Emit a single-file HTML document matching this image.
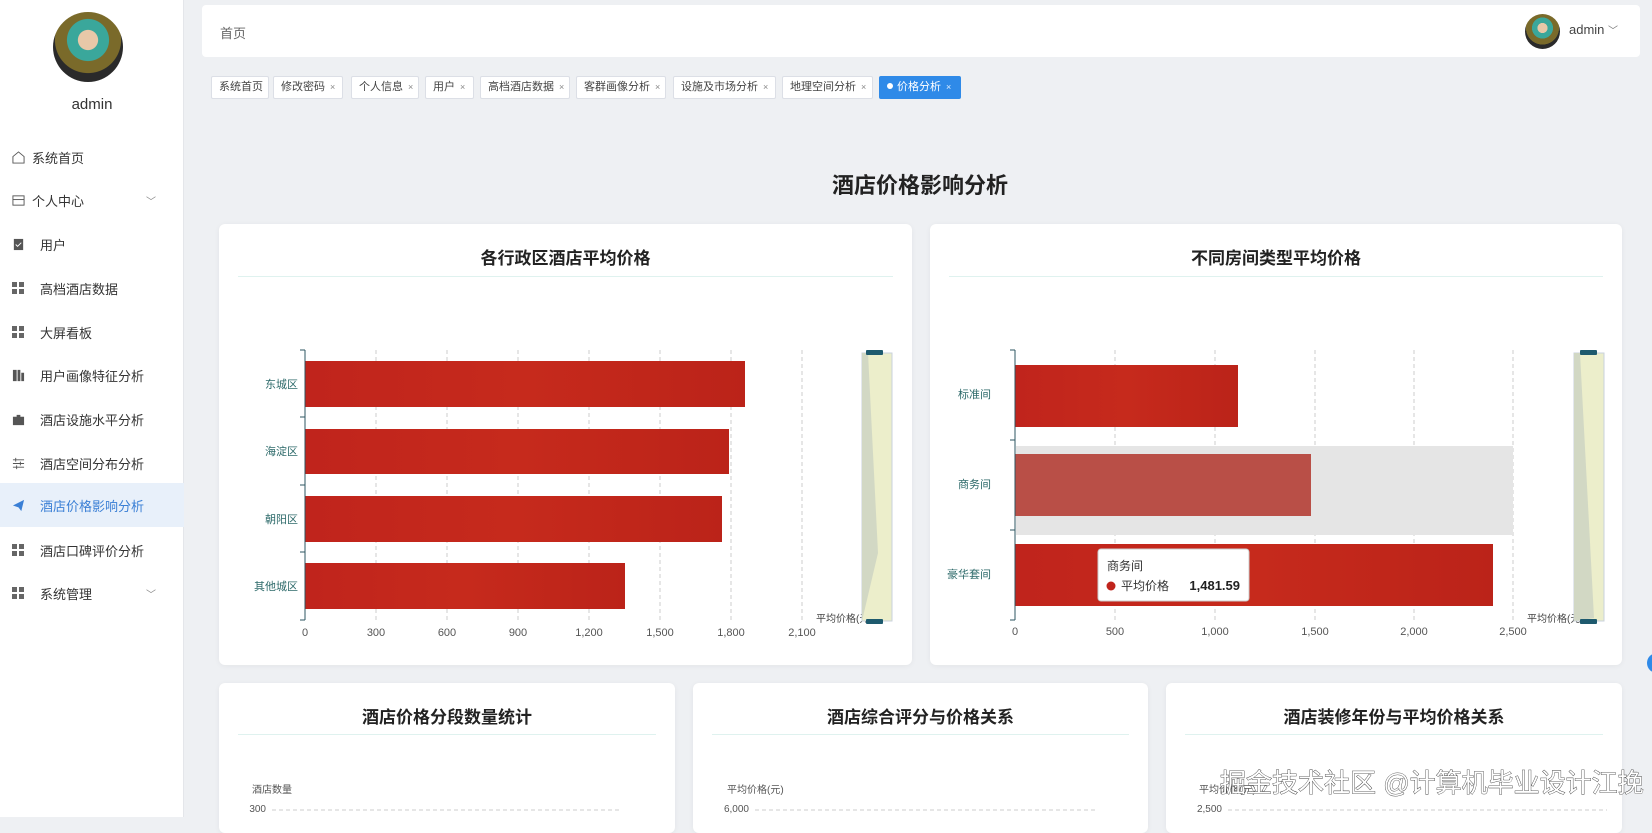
<!DOCTYPE html>
<html><head><meta charset="utf-8"><style>
*{margin:0;padding:0;box-sizing:border-box}
body{width:1652px;height:817px;overflow:hidden;background:#eef0f3;font-family:"Liberation Sans","Noto Sans CJK SC",sans-serif;position:relative;color:#333}
.sb{position:absolute;left:0;top:0;width:184px;height:817px;background:#fff;border-right:1px solid #e4e6ea}
.av{position:absolute;border-radius:50%;background:radial-gradient(circle at 50% 40%,#e8c8a8 0 18%,#3aa79b 19% 38%,#7a6a2a 39% 60%,#2a2a2a 61%);overflow:hidden}
.mi{position:absolute;left:0;width:184px;height:44px;font-size:13px;color:#333;display:flex;align-items:center}
.mi .ic{position:absolute;left:12px;width:13px;height:13px}
.mi span{position:absolute;left:40px}
.mi.act{background:#e8f0fa;color:#3a7fd5}
.g4{background:linear-gradient(#666,#666) 0 0/5px 5px no-repeat,linear-gradient(#666,#666) 7px 0/5px 5px no-repeat,linear-gradient(#666,#666) 0 7px/5px 5px no-repeat,linear-gradient(#666,#666) 7px 7px/5px 5px no-repeat}
.hd{position:absolute;left:202px;top:5px;width:1438px;height:52px;background:#fff;border-radius:4px}
.tag{position:absolute;top:76px;height:23px;background:#fff;border:1px solid #dcdfe6;border-radius:2px;font-size:11px;color:#444;line-height:21px;padding-left:7px;white-space:nowrap}
.tag i{font-style:normal;font-size:9px;color:#888;margin-left:5px}
.card{position:absolute;background:#fff;border-radius:6px;box-shadow:0 1px 6px rgba(0,0,0,.05)}
.ct{position:absolute;left:0;right:0;text-align:center;font-size:17px;font-weight:bold;color:#222}
.ul{position:absolute;height:1px;background:#dff2ef}
</style></head><body>
<div class="sb">
 <div class="av" style="left:53px;top:12px;width:70px;height:70px"></div>
 <div style="position:absolute;top:96px;width:184px;text-align:center;font-size:15px;color:#333">admin</div>
 <div class="mi" style="top:135px"><svg class="ic" viewBox="0 0 14 14"><path d="M1 6L7 1l6 5v7H1z" fill="none" stroke="#555"/></svg><span style="left:32px">系统首页</span></div>
 <div class="mi" style="top:178px"><svg class="ic" viewBox="0 0 14 14"><rect x="1" y="2" width="12" height="10" fill="none" stroke="#555"/><path d="M1 6h12" stroke="#555"/></svg><span style="left:32px">个人中心</span><span style="left:146px;font-size:10px;color:#888">﹀</span></div>
 <div class="mi" style="top:222px"><svg class="ic" viewBox="0 0 14 14"><rect x="2" y="1" width="10" height="12" fill="#555"/><path d="M4 7l2 2 4-4" stroke="#fff" fill="none"/></svg><span>用户</span></div>
 <div class="mi" style="top:266px"><div class="ic g4"></div><span>高档酒店数据</span></div>
 <div class="mi" style="top:310px"><div class="ic g4"></div><span>大屏看板</span></div>
 <div class="mi" style="top:353px"><svg class="ic" viewBox="0 0 14 14"><path d="M1 1h4v12H1zM6 1h3v12H6zM10 4h3v9h-3z" fill="#555"/></svg><span>用户画像特征分析</span></div>
 <div class="mi" style="top:397px"><svg class="ic" viewBox="0 0 14 14"><path d="M1 4h12v9H1zM5 2h4v2H5z" fill="#555"/></svg><span>酒店设施水平分析</span></div>
 <div class="mi" style="top:441px"><svg class="ic" viewBox="0 0 14 14"><path d="M1 3h12M1 7h12M1 11h12" stroke="#555"/><path d="M4 1v4M9 5v4M5 9v4" stroke="#555"/></svg><span>酒店空间分布分析</span></div>
 <div class="mi act" style="top:483px"><svg class="ic" viewBox="0 0 14 14"><path d="M1 7L13 1 10 13 7 9z" fill="#3a7fd5"/></svg><span>酒店价格影响分析</span></div>
 <div class="mi" style="top:528px"><div class="ic g4"></div><span>酒店口碑评价分析</span></div>
 <div class="mi" style="top:571px"><div class="ic g4"></div><span>系统管理</span><span style="left:146px;font-size:10px;color:#888">﹀</span></div>
</div>
<div class="hd">
 <div style="position:absolute;left:18px;top:18px;font-size:13px;color:#666">首页</div>
 <div class="av" style="left:1323px;top:9px;width:35px;height:35px"></div>
 <div style="position:absolute;left:1367px;top:17px;font-size:13px;color:#444">admin <span style="font-size:10px;color:#777">﹀</span></div>
</div>
<div class="tag" style="left:211px;width:58px">系统首页</div>
<div class="tag" style="left:273px;width:70px">修改密码<i>×</i></div>
<div class="tag" style="left:351px;width:68px">个人信息<i>×</i></div>
<div class="tag" style="left:425px;width:49px">用户<i>×</i></div>
<div class="tag" style="left:480px;width:90px">高档酒店数据<i>×</i></div>
<div class="tag" style="left:576px;width:90px">客群画像分析<i>×</i></div>
<div class="tag" style="left:673px;width:103px">设施及市场分析<i>×</i></div>
<div class="tag" style="left:782px;width:91px">地理空间分析<i>×</i></div>
<div class="tag" style="left:879px;width:82px;background:#2f8ae8;border-color:#2f8ae8;color:#fff"><span style="display:inline-block;width:6px;height:6px;border-radius:50%;background:#fff;margin-right:4px;vertical-align:1px"></span>价格分析<i style="color:#dfeeff">×</i></div>
<div style="position:absolute;left:200px;width:1440px;top:168px;text-align:center;font-size:22px;font-weight:bold;color:#222">酒店价格影响分析</div>
<div class="card" style="left:219px;top:224px;width:693px;height:441px"><div class="ct" style="top:20px">各行政区酒店平均价格</div><div class="ul" style="left:19px;right:19px;top:52px"></div></div>
<div class="card" style="left:930px;top:224px;width:692px;height:441px"><div class="ct" style="top:20px">不同房间类型平均价格</div><div class="ul" style="left:19px;right:19px;top:52px"></div></div>
<div class="card" style="left:219px;top:683px;width:456px;height:150px"><div class="ct" style="top:20px">酒店价格分段数量统计</div><div class="ul" style="left:19px;right:19px;top:51px"></div></div>
<div class="card" style="left:693px;top:683px;width:455px;height:150px"><div class="ct" style="top:20px">酒店综合评分与价格关系</div><div class="ul" style="left:19px;right:19px;top:51px"></div></div>
<div class="card" style="left:1166px;top:683px;width:456px;height:150px"><div class="ct" style="top:20px">酒店装修年份与平均价格关系</div><div class="ul" style="left:19px;right:19px;top:51px"></div></div>
<svg style="position:absolute;left:0;top:0" width="1652" height="817" font-family="Liberation Sans,Noto Sans CJK SC,sans-serif">
<defs><linearGradient id="r" x1="0" x2="1"><stop offset="0" stop-color="#c0241c"/><stop offset=".5" stop-color="#c62a1c"/><stop offset="1" stop-color="#bb2319"/></linearGradient></defs>
<g stroke="#ccc" stroke-dasharray="4,3">
<path d="M376 350V620M447 350V620M518 350V620M589 350V620M660 350V620M731 350V620M802 350V620"/>
<path d="M1115 350V620M1215 350V620M1315 350V620M1414 350V620M1513 350V620"/>
</g>
<g fill="url(#r)">
<rect x="305" y="361" width="440" height="46"/><rect x="305" y="429" width="424" height="45"/><rect x="305" y="496" width="417" height="46"/><rect x="305" y="563" width="320" height="46"/>
</g>
<g stroke="#2d5560"><path d="M305 350V620M300 350h5M300 417h5M300 485h5M300 552h5M300 620h5"/></g>
<g font-size="11" fill="#2d6a6a" text-anchor="end"><text x="298" y="388">东城区</text><text x="298" y="455">海淀区</text><text x="298" y="523">朝阳区</text><text x="298" y="590">其他城区</text></g>
<g font-size="11" fill="#555" text-anchor="middle"><text x="305" y="636">0</text><text x="376" y="636">300</text><text x="447" y="636">600</text><text x="518" y="636">900</text><text x="589" y="636">1,200</text><text x="660" y="636">1,500</text><text x="731" y="636">1,800</text><text x="802" y="636">2,100</text></g>
<text x="816" y="622" font-size="10" fill="#444">平均价格(元)</text>
<rect x="862" y="353" width="30" height="268" fill="#eceecb" stroke="#c9d2dc"/><path d="M862 353h6l10 200-16 68z" fill="#d2d8c4"/>
<rect x="866" y="350" width="17" height="5" rx="1" fill="#1e5a6e"/><rect x="866" y="619" width="17" height="5" rx="1" fill="#1e5a6e"/>
<rect x="1016" y="446" width="497" height="89" fill="#e5e5e5"/>
<rect x="1015" y="365" width="223" height="62" fill="url(#r)"/>
<rect x="1015" y="454" width="296" height="62" fill="#b94f47"/>
<rect x="1015" y="544" width="478" height="62" fill="url(#r)"/>
<g stroke="#2d5560"><path d="M1015 350V620M1010 350h5M1010 440h5M1010 530h5M1010 620h5"/></g>
<g font-size="11" fill="#2d6a6a" text-anchor="end"><text x="991" y="398">标准间</text><text x="991" y="488">商务间</text><text x="991" y="578">豪华套间</text></g>
<g font-size="11" fill="#555" text-anchor="middle"><text x="1015" y="635">0</text><text x="1115" y="635">500</text><text x="1215" y="635">1,000</text><text x="1315" y="635">1,500</text><text x="1414" y="635">2,000</text><text x="1513" y="635">2,500</text></g>
<text x="1527" y="622" font-size="10" fill="#444">平均价格(元)</text>
<rect x="1574" y="353" width="30" height="268" fill="#eceecb" stroke="#c9d2dc"/><path d="M1574 353h6l14 265-20 3z" fill="#d2d8c4"/>
<rect x="1580" y="350" width="17" height="5" rx="1" fill="#1e5a6e"/><rect x="1580" y="619" width="17" height="5" rx="1" fill="#1e5a6e"/>
<rect x="1098" y="549" width="151" height="52" rx="3" fill="#fff" stroke="#ccc"/>
<text x="1107" y="570" font-size="12" fill="#333">商务间</text>
<circle cx="1111" cy="586" r="4.5" fill="#c0241c"/><text x="1121" y="590" font-size="12" fill="#333">平均价格</text><text x="1240" y="590" font-size="13" font-weight="bold" fill="#222" text-anchor="end">1,481.59</text>
<g font-size="10" fill="#555"><text x="252" y="793">酒店数量</text><text x="266" y="812" text-anchor="end">300</text><text x="727" y="793">平均价格(元)</text><text x="749" y="812" text-anchor="end">6,000</text><text x="1199" y="793">平均价格(元)</text><text x="1222" y="812" text-anchor="end">2,500</text></g>
<g stroke="#ccc" stroke-dasharray="4,3"><path d="M272 810H622M755 810H1096M1228 810H1607"/></g>
<circle cx="1657" cy="663" r="10" fill="#2f8ae8"/>
<text x="1220" y="792" font-size="26" fill="#fff" stroke="#333" stroke-width=".8" style="paint-order:stroke">掘金技术社区 @计算机毕业设计江挽</text>
</svg>
</body></html>
